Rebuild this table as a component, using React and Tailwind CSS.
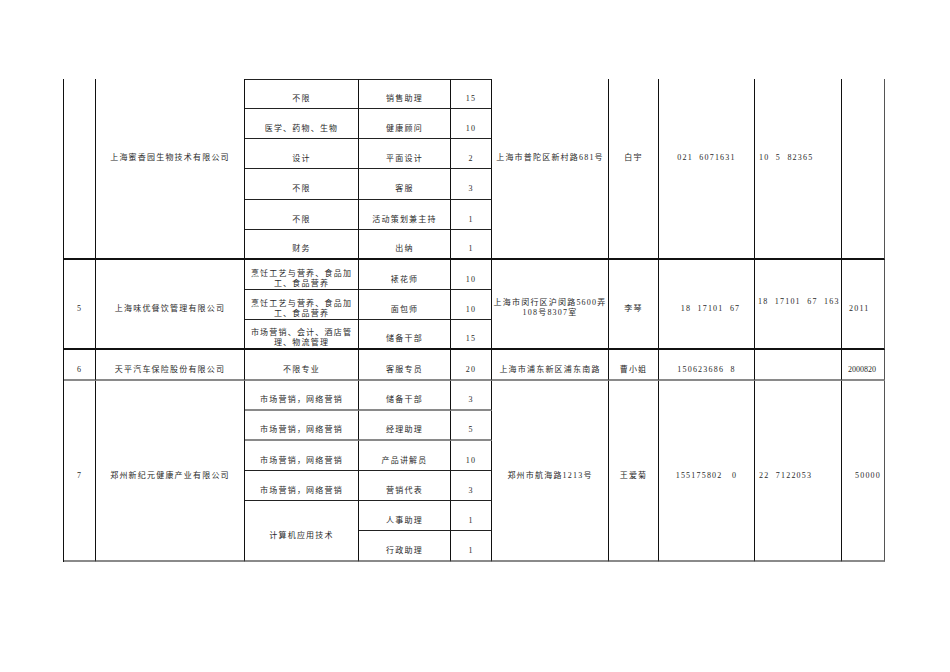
import React from 'react';

const thick = 'border-b-2 border-b-[#111]';
const grey = 'border-b-2 border-b-[#8a8a8a]';
const thin = 'border-b border-b-[#222]';

const cells = [
  // 上一页延续的一组
  { pos: 'col-start-1 row-start-1 row-span-6', b: thick },
  { pos: 'col-start-2 row-start-1 row-span-6', b: thick, pad: 'pb-[22px]', text: '上海蜜香园生物技术有限公司' },
  { pos: 'col-start-3 row-start-1', b: thin, top: true, text: '不限' },
  { pos: 'col-start-3 row-start-2', b: thin, text: '医学、药物、生物' },
  { pos: 'col-start-3 row-start-3', b: thin, text: '设计' },
  { pos: 'col-start-3 row-start-4', b: thin, text: '不限' },
  { pos: 'col-start-3 row-start-5', b: thin, text: '不限' },
  { pos: 'col-start-3 row-start-6', b: thick, text: '财务' },
  { pos: 'col-start-4 row-start-1', b: thin, top: true, text: '销售助理' },
  { pos: 'col-start-4 row-start-2', b: thin, text: '健康顾问' },
  { pos: 'col-start-4 row-start-3', b: thin, text: '平面设计' },
  { pos: 'col-start-4 row-start-4', b: thin, text: '客服' },
  { pos: 'col-start-4 row-start-5', b: thin, text: '活动策划兼主持' },
  { pos: 'col-start-4 row-start-6', b: thick, text: '出纳' },
  { pos: 'col-start-5 row-start-1', b: thin, top: true, text: '15' },
  { pos: 'col-start-5 row-start-2', b: thin, text: '10' },
  { pos: 'col-start-5 row-start-3', b: thin, text: '2' },
  { pos: 'col-start-5 row-start-4', b: thin, text: '3' },
  { pos: 'col-start-5 row-start-5', b: thin, text: '1' },
  { pos: 'col-start-5 row-start-6', b: thick, text: '1' },
  { pos: 'col-start-6 row-start-1 row-span-6', b: thick, pad: 'pb-[22px]', text: '上海市普陀区新村路681号' },
  { pos: 'col-start-7 row-start-1 row-span-6', b: thick, pad: 'pb-[22px]', text: '白宇' },
  { pos: 'col-start-8 row-start-1 row-span-6', b: thick, pad: 'pb-[22px]', text: '021  6071631' },
  { pos: 'col-start-9 row-start-1 row-span-6', b: thick, pad: 'pb-[22px]', align: 'justify-start pl-[4px]', text: '10  5  82365' },
  { pos: 'col-start-10 row-start-1 row-span-6', b: thick, edge: true },

  // 5
  { pos: 'col-start-1 row-start-7 row-span-3', b: thick, text: '5' },
  { pos: 'col-start-2 row-start-7 row-span-3', b: thick, text: '上海味优餐饮管理有限公司' },
  { pos: 'col-start-3 row-start-7', b: thin, pad: 'pt-[8px]', text: ['烹饪工艺与营养、食品加', '工、食品营养'] },
  { pos: 'col-start-3 row-start-8', b: thin, pad: 'pt-[8px]', text: ['烹饪工艺与营养、食品加', '工、食品营养'] },
  { pos: 'col-start-3 row-start-9', b: thick, pad: 'pt-[8px]', text: ['市场营销、会计、酒店管', '理、物流管理'] },
  { pos: 'col-start-4 row-start-7', b: thin, text: '裱花师' },
  { pos: 'col-start-4 row-start-8', b: thin, text: '面包师' },
  { pos: 'col-start-4 row-start-9', b: thick, text: '储备干部' },
  { pos: 'col-start-5 row-start-7', b: thin, text: '10' },
  { pos: 'col-start-5 row-start-8', b: thin, text: '10' },
  { pos: 'col-start-5 row-start-9', b: thick, text: '15' },
  { pos: 'col-start-6 row-start-7 row-span-3', b: thick, pad: 'pt-[7px]', text: ['上海市闵行区沪闵路5600弄', '108号8307室'] },
  { pos: 'col-start-7 row-start-7 row-span-3', b: thick, text: '李琴' },
  { pos: 'col-start-8 row-start-7 row-span-3', b: thick, pad: 'pt-[10px] pl-[8px]', text: '18  17101  67' },
  { pos: 'col-start-9 row-start-7 row-span-3', b: thick, pad: 'pb-[4px]', align: 'justify-start pl-[3px]', text: '18  17101  67  163' },
  { pos: 'col-start-10 row-start-7 row-span-3', b: thick, edge: true, align: 'justify-start pl-[7px]', text: '2011' },

  // 6
  { pos: 'col-start-1 row-start-10', b: grey, text: '6' },
  { pos: 'col-start-2 row-start-10', b: grey, text: '天平汽车保险股份有限公司' },
  { pos: 'col-start-3 row-start-10', b: grey, text: '不限专业' },
  { pos: 'col-start-4 row-start-10', b: grey, text: '客服专员' },
  { pos: 'col-start-5 row-start-10', b: grey, text: '20' },
  { pos: 'col-start-6 row-start-10', b: grey, text: '上海市浦东新区浦东南路' },
  { pos: 'col-start-7 row-start-10', b: grey, text: '曹小姐' },
  { pos: 'col-start-8 row-start-10', b: grey, text: '150623686  8' },
  { pos: 'col-start-9 row-start-10', b: grey },
  { pos: 'col-start-10 row-start-10', b: grey, edge: true, align: 'justify-start pl-[6px]', tight: true, text: '2000820' },

  // 7
  { pos: 'col-start-1 row-start-11 row-span-6', b: grey, text: '7' },
  { pos: 'col-start-2 row-start-11 row-span-6', b: grey, text: '郑州新纪元健康产业有限公司' },
  { pos: 'col-start-3 row-start-11', b: grey, text: '市场营销，网络营销' },
  { pos: 'col-start-3 row-start-12', b: grey, text: '市场营销，网络营销' },
  { pos: 'col-start-3 row-start-13', b: thin, text: '市场营销，网络营销' },
  { pos: 'col-start-3 row-start-14', b: thin, text: '市场营销，网络营销' },
  { pos: 'col-start-3 row-start-15 row-span-2', b: grey, text: '计算机应用技术' },
  { pos: 'col-start-4 row-start-11', b: grey, text: '储备干部' },
  { pos: 'col-start-4 row-start-12', b: grey, text: '经理助理' },
  { pos: 'col-start-4 row-start-13', b: thin, text: '产品讲解员' },
  { pos: 'col-start-4 row-start-14', b: thin, text: '营销代表' },
  { pos: 'col-start-4 row-start-15', b: thin, text: '人事助理' },
  { pos: 'col-start-4 row-start-16', b: grey, text: '行政助理' },
  { pos: 'col-start-5 row-start-11', b: grey, text: '3' },
  { pos: 'col-start-5 row-start-12', b: grey, text: '5' },
  { pos: 'col-start-5 row-start-13', b: thin, text: '10' },
  { pos: 'col-start-5 row-start-14', b: thin, text: '3' },
  { pos: 'col-start-5 row-start-15', b: thin, text: '1' },
  { pos: 'col-start-5 row-start-16', b: grey, text: '1' },
  { pos: 'col-start-6 row-start-11 row-span-6', b: grey, text: '郑州市航海路1213号' },
  { pos: 'col-start-7 row-start-11 row-span-6', b: grey, text: '王爱菊' },
  { pos: 'col-start-8 row-start-11 row-span-6', b: grey, text: '155175802   0' },
  { pos: 'col-start-9 row-start-11 row-span-6', b: grey, align: 'justify-start pl-[4px]', text: '22  7122053' },
  { pos: 'col-start-10 row-start-11 row-span-6', b: grey, edge: true, align: 'justify-end pr-[3px]', text: '50000' },
];

function Cell({ pos, b, top, edge, pad, align, tight, text }) {
  const lines = Array.isArray(text) ? text : text ? [text] : [];
  return (
    <div
      className={`${pos} ${b} ${top ? 'border-t border-t-[#222]' : ''} ${
        edge ? 'border-r border-r-[#555]' : 'border-r border-r-[#111]'
      } flex items-center overflow-hidden ${align || 'justify-center text-center'} ${pad || 'pt-[10px]'}`}
    >
      {lines.length > 0 && (
        <div className={`whitespace-pre leading-[10px] ${tight ? 'tracking-[0px]' : 'tracking-[1.2px]'}`}>
          {lines.map((l, i) => (
            <div key={i}>{l}</div>
          ))}
        </div>
      )}
    </div>
  );
}

export default function App() {
  return (
    <div className="w-[950px] h-[672px] bg-white overflow-hidden font-['Liberation_Serif','Noto_Sans_CJK_SC',serif] text-[8px] text-[#2a2a2a]">
      <div className="ml-[63px] mt-[79px] w-[822px] grid grid-cols-[32px_149px_114px_92px_41px_117px_50px_96px_87px_43px] grid-rows-[30px_30px_30px_31px_30px_30px_30px_30px_30px_31px_30px_30px_30px_30px_30px_31px] border-l border-l-[#111]">
        {cells.map((c, i) => (
          <Cell key={i} {...c} />
        ))}
      </div>
    </div>
  );
}
